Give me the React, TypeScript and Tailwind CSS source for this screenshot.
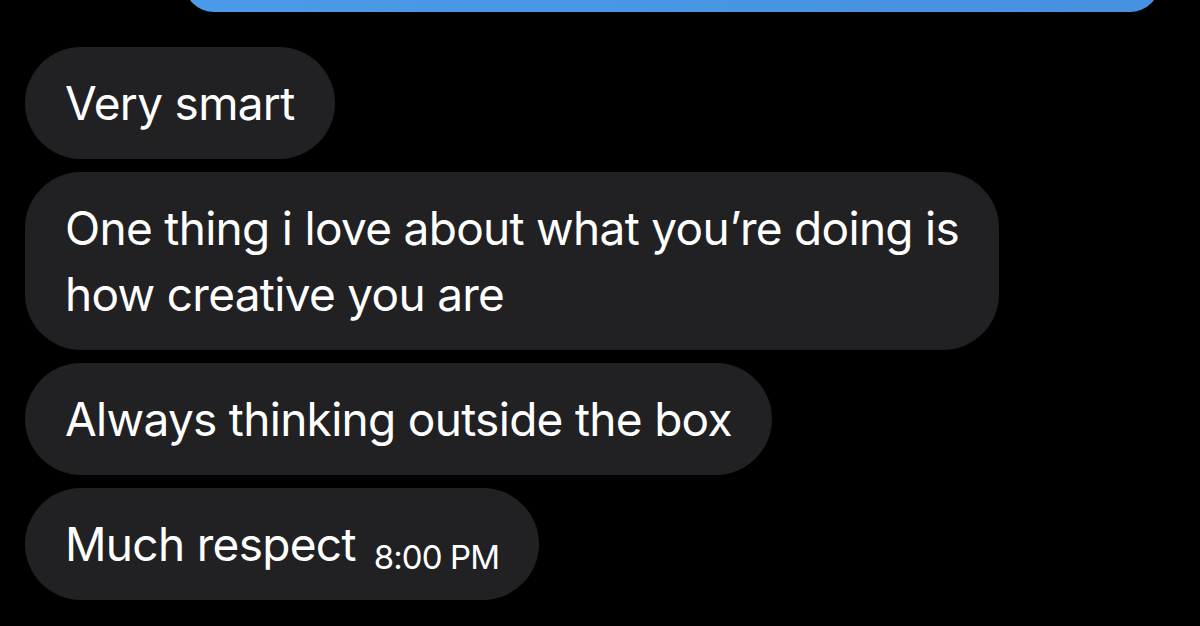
const messages = [
  { id: 1, lines: ['Very smart'] },
  { id: 2, lines: ['One thing i love about what you’re doing is', 'how creative you are'] },
  { id: 3, lines: ['Always thinking outside the box'] },
];

function Bubble({ children }: { children: React.ReactNode }) {
  return (
    <div className="self-start rounded-[56px] bg-[#212124] px-[40px] py-[23px] text-[46px] leading-[66px] tracking-[-0.7px] text-white">
      {children}
    </div>
  );
}

export default function App() {
  return (
    <div className="h-[626px] w-[1200px] overflow-hidden bg-black font-['Inter',sans-serif]">
      <div className="-mt-[48px] ml-[184px] h-[60px] w-[976px] rounded-[44px] bg-gradient-to-r from-[#4a9be9] to-[#4690e0]" />
      <div className="mt-[35px] flex flex-col gap-[13px] pl-[25px]">
        {messages.map((m) => (
          <Bubble key={m.id}>
            {m.lines.map((l, i) => (
              <div key={i}>{l}</div>
            ))}
          </Bubble>
        ))}
        <Bubble>
          <div className="flex h-[66px] items-baseline">
            <span>Much respect</span>
            <span className="ml-[18px] translate-y-[8px] text-[33px] leading-none tracking-[-0.9px]">8:00 PM</span>
          </div>
        </Bubble>
      </div>
    </div>
  );
}
